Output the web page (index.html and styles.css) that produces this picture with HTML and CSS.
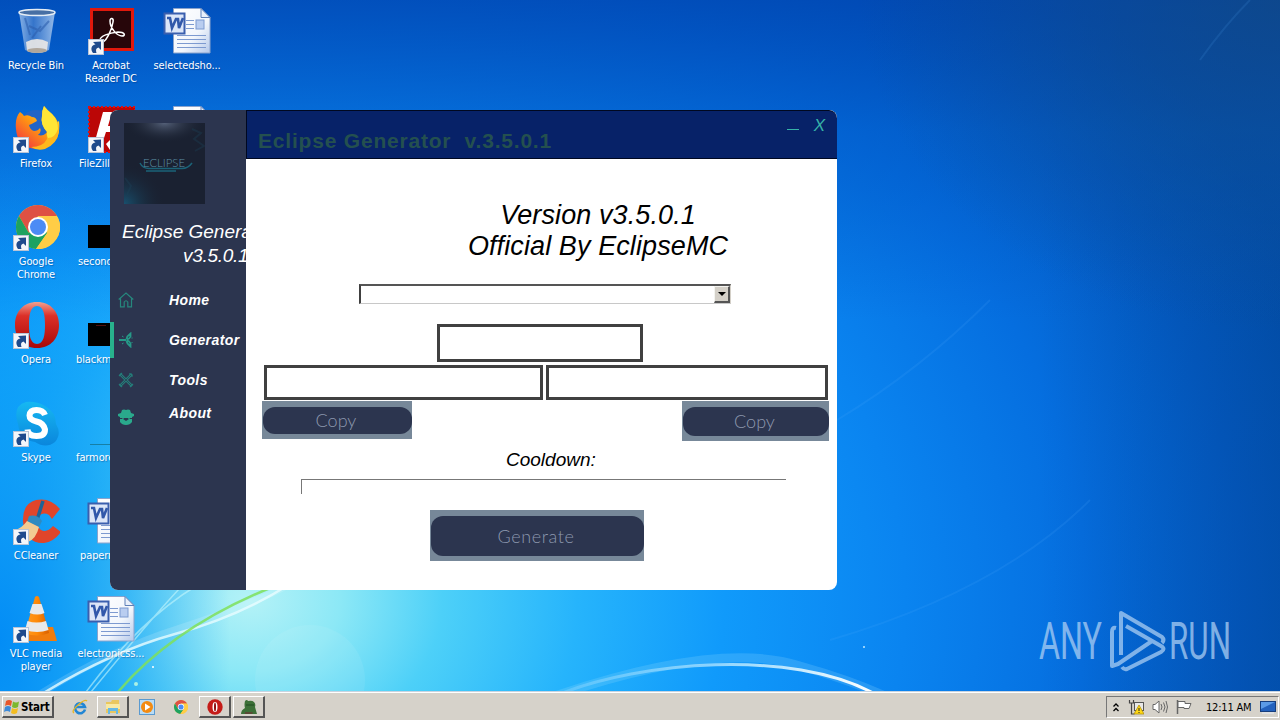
FILE: index.html
```html
<!DOCTYPE html>
<html lang="en">
<head>
    <meta charset="UTF-8">
    <meta name="viewport" content="width=device-width, initial-scale=1.0">
    <title>Eclipse Generator</title>
    <link rel="stylesheet" href="styles.css">
</head>
<body>

    <!-- Shared icons -->
    <svg width="0" height="0" class="defs">
        <defs>
            <linearGradient id="fox" x1="1" y1="0" x2="0" y2="1"><stop offset="0" stop-color="#ffee38"/><stop offset=".45" stop-color="#ff9a10"/><stop offset="1" stop-color="#f0204a"/></linearGradient>
            <linearGradient id="red" x1="0" y1="0" x2="0" y2="1"><stop offset="0" stop-color="#f0a090"/><stop offset=".3" stop-color="#dc3028"/><stop offset="1" stop-color="#a80808"/></linearGradient>
            <linearGradient id="page" x1="0" y1="0" x2="1" y2="1"><stop offset="0" stop-color="#ffffff"/><stop offset=".6" stop-color="#f2f6fc"/><stop offset="1" stop-color="#b4c8ea"/></linearGradient>
            <linearGradient id="glass" x1="0" y1="0" x2="1" y2="0"><stop offset="0" stop-color="#a9c9ee" stop-opacity=".8"/><stop offset=".4" stop-color="#4b83cf" stop-opacity=".7"/><stop offset="1" stop-color="#b9d3f2" stop-opacity=".8"/></linearGradient>
            <linearGradient id="skype" x1="0" y1="0" x2="0" y2="1"><stop offset="0" stop-color="#16b8f2"/><stop offset="1" stop-color="#0a86dc"/></linearGradient>
            <linearGradient id="cone" x1="0" y1="0" x2="1" y2="0"><stop offset="0" stop-color="#ff9a20"/><stop offset=".5" stop-color="#ff8a08"/><stop offset="1" stop-color="#d86000"/></linearGradient>
            <linearGradient id="arc" x1="0" y1="0" x2="1" y2="0"><stop offset="0" stop-color="#9fdcff" stop-opacity=".3"/><stop offset=".6" stop-color="#c8efff" stop-opacity=".8"/><stop offset="1" stop-color="#fff"/></linearGradient>
        </defs>
        <symbol id="shortcut" viewBox="0 0 16 16">
            <rect x=".5" y=".5" width="15" height="15" fill="#f4f6fa" stroke="#b9c4d6"/>
            <path d="M5 14C2 10 3.500 6 7.500 5.500L5 3l8-.500v8.500L10.500 8.500C8 9 7.500 11 8.500 14z" fill="#1f4a8c"/>
        </symbol>
        <symbol id="word" viewBox="0 0 48 48">
            <path d="M10.500.500H38l9 9V45H10.500z" fill="url(#page)" stroke="#8ba3cc"/>
            <path d="M38 .500v9h9z" fill="#e8effa" stroke="#5f80b8"/>
            <path d="M23 12.500h8M23 16.500h8M23 20.500h8M14 27.500h29M14 31.500h29M14 35.500h29M14 39.500h29" stroke="#7d9ad0"/>
            <rect x="33" y="12" width="8" height="9" fill="#b9cdf0" stroke="#7d9ad0"/>
            <rect x="1.500" y="5.500" width="20" height="20" fill="#dce6f8" stroke="#3a5fae" stroke-width="2"/>
            <path d="M4 10h3l2 10 4-9h2l1 9 4-10" fill="none" stroke="#3158aa" stroke-width="2.600"/>
        </symbol>
        <symbol id="chrome" viewBox="0 0 44 44">
            <circle cx="22" cy="22" r="22" fill="#ffcd46"/>
            <path d="M3 11A22 22 0 0 1 41 11H22L12.500 27.500z" fill="#de5144"/>
            <path d="M3 11A22 22 0 0 0 20 44L31.500 27.500H12.500z" fill="#1da261"/>
            <path d="M31.500 27.500L20 44A22 22 0 0 0 41.500 12H22z" fill="#ffcd46"/>
            <circle cx="22" cy="22" r="10" fill="#fff"/>
            <circle cx="22" cy="22" r="8" fill="#4c8bf5"/>
        </symbol>
        <symbol id="opera" viewBox="0 0 44 46">
            <path fill-rule="evenodd" d="M22 0C36 0 44 10 44 23S36 46 22 46 0 36 0 23 8 0 22 0zM22 4C15 4 14 14 14 23s1 19 8 19 8-10 8-19-1-19-8-19z" fill="url(#red)"/>
        </symbol>
    </svg>

    <div class="screen">
        <div class="desktop">

            <!-- Light streaks of the wallpaper -->
            <svg class="wallpaper" viewBox="0 0 1280 692" width="1280" height="692">
                <g fill="none">
                    <path d="M40 694Q110 650 180 628T290 584" stroke="#fff" stroke-width="7" opacity=".15"/>
                    <path d="M42 694Q110 652 175 634T290 584" stroke="#e8fcff" stroke-width="2.500" opacity=".8"/>
                    <path d="M118 692Q175 625 280 584" stroke="#7fe05a" stroke-width="2.500" opacity=".85"/>
                    <path d="M86 692Q140 620 196 586M91 692Q150 620 180 588" stroke="#c4f6fb" stroke-width="1.500" opacity=".6"/>
                    <path d="M555 696Q720 640 800 666Q850 680 885 696" stroke="#9fe2ff" stroke-width="9" opacity=".2"/>
                    <path d="M560 694C640 662 790 648 875 694" stroke="url(#arc)" stroke-width="3"/>
                    <path d="M837 420Q920 370 990 300M830 640Q1000 590 1090 500M1200 60Q1225 25 1250 0" stroke="#5fb4ff" stroke-width="2" opacity=".13"/>
                </g>
                <circle cx="310" cy="680" r="55" fill="#fff" opacity=".07"/>
                <circle cx="136" cy="684" r="2" fill="#c8ffe0" opacity=".8"/>
                <circle cx="153" cy="667" r="1" fill="#fff"/>
                <circle cx="864" cy="647" r="1" fill="#bfe8ff"/>
            </svg>

            <div class="icons">
                <div class="icon">
                    <svg viewBox="0 0 48 48">
                        <path d="M7 4h36l-6 38q-12 6-24 0z" fill="url(#glass)"/>
                        <path d="M14 34q11-6 22 0l-1 9q-10 4-20 0z" fill="#ece9e6" opacity=".9"/>
                        <path d="M13 10l5 17M17 18l11 5 9-10M20 30l9-12" stroke="#2d5fae" stroke-width="2" fill="none" opacity=".6"/>
                        <ellipse cx="25" cy="4.500" rx="18" ry="3" fill="#476fa4" stroke="#e5edf5" stroke-width="1.500"/>
                        <ellipse cx="25" cy="42.500" rx="10" ry="2.500" fill="#b0a79c"/>
                    </svg>
                    <span>Recycle Bin</span>
                </div>
                <div class="icon">
                    <svg viewBox="0 0 48 48">
                        <circle cx="24" cy="21" r="17" fill="#2164c8"/>
                        <path d="M4 23C3 15 5 9 8 6q3 2 4 4 4-2 8 1 4 0 5 4-5 3-8 4 1 5 5 6 4 0 6-3 2 4-2 7 8 2 10-6l11-8q3 26-22 28Q5 42 4 23z" fill="url(#fox)"/>
                        <path d="M32 0q3 4 8 8 8 7 7 18-2 12-14 17-8 2-14-2 12 0 16-8-1-3 1-6-8-8-6-17 0-6 2-10z" fill="#ffb81c"/>
                        <path d="M32 0q3 4 8 8 6 6 6 15-3 9-10 9-2-3-1-6-7-8-5-16 0-6 2-10z" fill="#ffe636"/>
                        <use href="#shortcut" x="1" y="31" width="16" height="16"/>
                    </svg>
                    <span>Firefox</span>
                </div>
                <div class="icon">
                    <svg viewBox="0 0 48 48"><use href="#chrome" x="4" y="1" width="44" height="44"/><use href="#shortcut" x="1" y="31" width="16" height="16"/></svg>
                    <span>Google<br>Chrome</span>
                </div>
                <div class="icon">
                    <svg viewBox="0 0 48 48"><use href="#opera" x="3" y="0" width="44" height="46"/><use href="#shortcut" x="1" y="31" width="16" height="16"/></svg>
                    <span>Opera</span>
                </div>
                <div class="icon">
                    <svg viewBox="0 0 48 48">
                        <path d="M14 2Q24 1 33 6 44 12 44 24q6 10-1 18-9 7-20 0Q8 40 6 24 0 6 14 2z" fill="url(#skype)"/>
                        <path d="M33 15Q31 10 24.500 10T17.500 15.500q0 4.500 7 6T33 29.500q0 6.500-8.500 6.500T15.500 29.500" fill="none" stroke="#fff" stroke-width="6"/>
                        <use href="#shortcut" x="1" y="31" width="16" height="16"/>
                    </svg>
                    <span>Skype</span>
                </div>
                <div class="icon">
                    <svg viewBox="0 0 48 48">
                        <path d="M48 11Q38-1 24 2 10 6 11 24q3 22 21 21 10-1 17-11l-8-6q-6 7-12 4-5-4-3-12 4-7 11-3l3 4z" fill="#e0452a"/>
                        <path d="M31 3l-6 19" stroke="#1f6396" stroke-width="3.500"/>
                        <path d="M17 18q8-2 13 5l-3 6-12-5z" fill="#2f8ac0"/>
                        <path d="M15 23l12 6q-3 12-11 15-9-2-13-12 7-2 12-9z" fill="#f2cb92"/>
                        <use href="#shortcut" x="1" y="31" width="16" height="16"/>
                    </svg>
                    <span>CCleaner</span>
                </div>
                <div class="icon">
                    <svg viewBox="0 0 48 48">
                        <path d="M11 31h30l4 14H9z" fill="#f07c0c"/>
                        <path d="M23 1q2-2 4 0l10 36q-12 5-24 0z" fill="url(#cone)"/>
                        <path d="M20.500 8h9l3 9q-7 3-15 0zM15.500 25q9 3 18.500 0l2.500 9q-11 4-23.500 0z" fill="#e9e9e9"/>
                        <use href="#shortcut" x="1" y="31" width="16" height="16"/>
                    </svg>
                    <span>VLC media<br>player</span>
                </div>

                <div class="icon">
                    <svg viewBox="0 0 48 48">
                        <rect x="4.500" y="1.500" width="41" height="40" fill="#27060a" stroke="#e0180c" stroke-width="3"/>
                        <path d="M13 32c0-4 9-7 18-8 7 0 8 4 4 4-5 0-12-8-12-15 0-4 4-3 3 1-1 7-6 18-10 20-2 1-3-.500-3-2z" fill="none" stroke="#fff" stroke-width="1.500"/>
                        <use href="#shortcut" x="1" y="31" width="16" height="16"/>
                    </svg>
                    <span>Acrobat<br>Reader DC</span>
                </div>
                <div class="icon cut cut-filezilla">
                    <svg viewBox="0 0 48 48">
                        <rect x="2" y="1" width="46" height="45" fill="#bb0606"/>
                        <rect x="2" y="1" width="46" height="45" fill="none" stroke="#e01010" stroke-width="2" stroke-dasharray="2 2"/>
                        <path d="M16 6h26l-2 7H23l-2 7h14l-2 6H19l-3 9H8z" fill="#fff"/>
                        <path d="M19 38l4-4 4 5-4 5z" fill="#fff"/>
                        <use href="#shortcut" x="1" y="31" width="16" height="16"/>
                    </svg>
                    <span>FileZilla</span>
                </div>
                <div class="icon cut cut-second">
                    <svg viewBox="0 0 48 48"><rect x="1" y="21" width="46" height="23"/></svg>
                    <span>second</span>
                </div>
                <div class="icon cut cut-black">
                    <svg viewBox="0 0 48 48"><rect x="1" y="21" width="46" height="23"/><path d="M9 23.500h10" stroke="#501010"/></svg>
                    <span>blackma</span>
                </div>
                <div class="icon cut cut-black">
                    <svg viewBox="0 0 48 48"><path d="M3 44.500h42" stroke="#167fa6"/></svg>
                    <span>farmore</span>
                </div>
                <div class="icon cut cut-paper">
                    <svg viewBox="0 0 48 48"><use href="#word" width="48" height="48"/></svg>
                    <span>papern</span>
                </div>
                <div class="icon">
                    <svg viewBox="0 0 48 48"><use href="#word" width="48" height="48"/></svg>
                    <span>electronicss...</span>
                </div>

                <div class="icon">
                    <svg viewBox="0 0 48 48"><use href="#word" width="48" height="48"/></svg>
                    <span>selectedsho...</span>
                </div>
                <div class="icon">
                    <svg viewBox="0 0 48 48"><use href="#word" width="48" height="48"/></svg>
                </div>
            </div>

            <svg class="watermark" viewBox="0 0 200 64" width="200" height="64">
                <g fill="#a9cdf3" opacity=".75">
                    <text x="2" y="50" textLength="63" lengthAdjust="spacingAndGlyphs">ANY</text>
                    <text x="132" y="50" textLength="62" lengthAdjust="spacingAndGlyphs">RUN</text>
                </g>
                <g fill="none" stroke="#a9cdf3" stroke-width="4" stroke-linejoin="round" opacity=".75">
                    <path d="M79 19q-4-1-4 4v34l6-2 34-23"/>
                    <path d="M84 46V4l41 24q3 3 0 6"/>
                    <path d="M89 17l35 20q5 3 0 6L90 60q-3 1-5-2"/>
                </g>
            </svg>

            <!-- Application window -->
            <div class="window">
                <div class="sidebar">
                    <svg class="logo" viewBox="0 0 81 81">
                        <defs>
                            <radialGradient id="lamp" cx=".5" cy="0" r=".5"><stop offset="0" stop-color="#546078"/><stop offset="1" stop-color="#1a2233" stop-opacity="0"/></radialGradient>
                            <radialGradient id="glow" cx="0" cy="1" r=".5"><stop offset="0" stop-color="#18506e"/><stop offset="1" stop-color="#1a2233" stop-opacity="0"/></radialGradient>
                        </defs>
                        <rect width="81" height="81" fill="#1a2131"/>
                        <rect width="81" height="40" fill="url(#lamp)"/>
                        <rect width="81" height="81" fill="url(#glow)"/>
                        <path d="M68 6l9 4-7 6 10 7-9 5M1 55l6 8-4 9" stroke="#1c4258" stroke-width="2" fill="none" opacity=".35"/>
                        <path d="M16 40q3 6 10 5.500h32q6 0 10-5.500M22 48h30" stroke="#1b6378" stroke-width="1.500" fill="none"/>
                        <text x="19" y="44" textLength="42" lengthAdjust="spacingAndGlyphs">ECLIPSE</text>
                    </svg>
                    <div class="brand">
                        <p>Eclipse Generator</p>
                        <p class="brand-version">v3.5.0.1</p>
                    </div>
                    <div class="menu">
                        <div class="menu-item home">
                            <svg viewBox="0 0 16 16" fill="none" stroke="#26877d" stroke-width="1.200"><path d="M.7 7.500L8 1l7.300 6.500M2.500 6.500v8.300h3.700V10q1.800-2.500 3.600 0v4.800h3.700V6.500"/></svg>
                            <span>Home</span>
                        </div>
                        <div class="menu-item active">
                            <svg viewBox="0 0 16 16" fill="none" stroke="#269a88"><path d="M1 8h7M8.500 7Q9 4 12.500 1.500v3Q11.500 7 8.500 8M8.500 9Q9 12 12.500 14.500v-3Q11.500 9 8.500 8" stroke-width="1.800"/><path d="M4 4l1.500 1M4 12l1.500-1M14 5.500v1M14 10v1"/></svg>
                            <span>Generator</span>
                        </div>
                        <div class="menu-item tools">
                            <svg viewBox="0 0 16 16" fill="none" stroke="#247c79"><path d="M2 2l12 12M14 2L2 14" stroke-width="2.600"/><path d="M1 4l3-3M12 1v3h3M1 12l3 3M12 15l3-3" stroke-width="1.200"/><path d="M3 3l10 10M13 3L3 13" stroke="#2c354f" stroke-width=".7"/></svg>
                            <span>Tools</span>
                        </div>
                        <div class="menu-item about">
                            <svg viewBox="0 0 16 16" fill="#2aa98c"><path d="M4 1q2-1 4 0 2-1 4 0l1 3 3 1v2l-2 1v1h-2q-1 2-2 0H6q-1 2-2 0H2V8L0 7V5l3-1z"/><path d="M2 10h3l3 2 3-2h3v3q-2 3-6 3t-6-3z"/></svg>
                            <span>About</span>
                        </div>
                    </div>
                </div>

                <div class="main">
                    <div class="titlebar">
                        <h1>Eclipse Generator&nbsp; v.3.5.0.1</h1>
                        <div class="controls"><span class="minimize"></span><span>X</span></div>
                    </div>
                    <div class="content">
                        <h2>Version v3.5.0.1<br>Official By EclipseMC</h2>
                        <div class="combo"><span class="combo-button"></span></div>
                        <div class="field field-name"></div>
                        <div class="row fields">
                            <div class="field field-left"></div>
                            <div class="field field-right"></div>
                        </div>
                        <div class="row copies">
                            <div class="button copy-left"><span>Copy</span></div>
                            <div class="button copy-right"><span>Copy</span></div>
                        </div>
                        <p class="cooldown">Cooldown:</p>
                        <div class="progress"></div>
                        <div class="button generate"><span>Generate</span></div>
                    </div>
                </div>
            </div>
        </div>

        <!-- Taskbar -->
        <div class="taskbar">
            <div class="start">
                <svg viewBox="0 0 16 16"><path d="M2 2q3-2 6 0L7 7Q4 5 1 7z" fill="#e8562a"/><path d="M9 2.500q3 2 6 0L14 8q-3 2-6 0z" fill="#7cb82f"/><path d="M1 8q3-2 6 0l-1 5q-3-2-6 0z" fill="#3d8ad8"/><path d="M8 9q3 2 6 0l-1 5q-3 2-6 0z" fill="#f4bd20"/></svg>
                <span>Start</span>
            </div>
            <div class="task ie">
                <svg viewBox="0 0 16 16" fill="none"><path d="M13 10.500A5 5 0 1 1 13 8H4" stroke="#2286d4" stroke-width="2.600"/><path d="M2 14Q-1 12 6 6T15 2" stroke="#e7b524" stroke-width="1.300"/></svg>
            </div>
            <div class="task raised">
                <svg viewBox="0 0 16 16"><path d="M1 3h5l1-2h7v4h1v9H1z" fill="#e9c75e"/><path d="M1 5h14v5H1z" fill="#f8e9a2"/><path d="M3 9h10v6h-2v-3H5v3H3z" fill="#67b9e4"/></svg>
            </div>
            <div class="task media">
                <svg viewBox="0 0 16 16"><rect x=".500" y=".500" width="15" height="15" fill="#b9dcf5" stroke="#5a9ad0"/><circle cx="8" cy="8" r="6" fill="#f38b12"/><path d="M6 4.500L11.500 8 6 11.500z" fill="#fff"/></svg>
            </div>
            <div class="task google">
                <svg viewBox="0 0 16 16"><use href="#chrome" x="1" y="1" width="14" height="14"/></svg>
            </div>
            <div class="task raised">
                <svg viewBox="0 0 16 16"><circle cx="8" cy="8" r="7.700" fill="#c51c18"/><ellipse cx="8" cy="8" rx="2.500" ry="5" fill="#fff"/><ellipse cx="8" cy="8" rx="1" ry="4.500" fill="#8c0e0e"/></svg>
            </div>
            <div class="task raised">
                <svg viewBox="0 0 16 16"><path d="M4 2q2-2 3 0 4-1 6 1 2 2 1 5l2 7H0q0-4 4-6-1-3 0-7z" fill="#3d7038"/><path d="M5 6h8" stroke="#204b20"/><path d="M4 13h8l-1 2H4z" fill="#5a4a36"/></svg>
            </div>
            <div class="tray">
                <svg class="chevrons" viewBox="0 0 8 10" fill="none" stroke="#000" stroke-width="1.300"><path d="M1.500 4.500L4 2l2.500 2.500M1.500 9L4 6.500 6.500 9"/></svg>
                <svg class="tray-icon" viewBox="0 0 16 16"><path d="M1.500 1v3h4V1M3.500 4v11h3" fill="none" stroke="#444" stroke-width="1.200"/><rect x="6.500" y="3.500" width="9" height="8" fill="#e8e8e8" stroke="#555"/><path d="M11 6l5 9H6z" fill="#ffd814" stroke="#a88600" stroke-width=".7"/><path d="M11 9v3M11 13v1" stroke="#222"/></svg>
                <svg class="tray-icon speaker" viewBox="0 0 16 16" fill="#fff" stroke="#666"><path d="M1 5.500h2L7 2v12l-4-3.500H1z"/><path d="M9 5q2 3 0 6M11.500 3.500q3 4.500 0 9M14 2q3 6 0 12" fill="none"/></svg>
                <svg class="tray-icon flag" viewBox="0 0 16 16" fill="#fff" stroke="#666"><path d="M1.500 1v14" stroke-width="1.500"/><path d="M2 2.500h7v2h6l-2 5H8v-1H2z"/></svg>
                <span class="clock">12:11 AM</span>
                <svg class="show-desktop" viewBox="0 0 16 14"><rect x=".500" y="1.500" width="15" height="10" fill="#2462bd" stroke="#173e7c"/><path d="M1 2h14L1 9z" fill="#5c9be6"/><path d="M2 13h12" stroke="#e8eef8"/></svg>
            </div>
        </div>
    </div>

</body>
</html>
```
FILE: styles.css
```css
* {
    box-sizing: border-box;
}
body {
    margin: 0;
    font-family: "Liberation Sans", Arial, sans-serif;
    overflow: hidden;
}
svg {
    display: block;
    flex-shrink: 0;
}
p, h1, h2 {
    margin: 0;
    font-weight: normal;
}
.defs {
    position: absolute;
}
.screen {
    width: 1280px;
    height: 720px;
    display: flex;
    flex-direction: column;
}

/* Desktop */
.desktop {
    position: relative;
    height: 691px;
    overflow: hidden;
    background:
        radial-gradient(ellipse 230px 480px at 0 640px, rgba(0, 138, 245, 0.95) 0%, rgba(0, 148, 246, 0.6) 50%, rgba(0, 150, 246, 0) 100%),
        radial-gradient(ellipse 420px 330px at 1280px 0, rgba(18, 72, 130, 0.75) 0%, rgba(10, 70, 140, 0) 100%),
        linear-gradient(180deg, rgba(0, 70, 178, 0.8) 0, rgba(0, 86, 196, 0.5) 130px, rgba(0, 100, 215, 0) 320px),
        linear-gradient(270deg, rgba(0, 66, 150, 0.4) 0, rgba(0, 70, 160, 0) 240px),
        radial-gradient(ellipse 1130px 900px at 250px 600px, #b4f2f7 0%, #8ce8f6 8%, #4dd0f8 17%, #26b4fc 29%, #109afb 42%, #0a84f0 58%, #056edf 74%, #045cc4 88%, #0352ac 100%);
}
.wallpaper {
    position: absolute;
    top: 0;
    left: 0;
}
.icons {
    position: relative;
    display: grid;
    grid-auto-flow: column;
    grid-template-rows: repeat(7, 98px);
    grid-template-columns: 75px 75px 77px;
    width: 227px;
}
.icon {
    display: flex;
    flex-direction: column;
    align-items: center;
    padding-top: 8px;
    padding-right: 3px;
    color: #fff;
    font-family: "DejaVu Sans Condensed", "DejaVu Sans", sans-serif;
    font-stretch: condensed;
    font-size: 11px;
    line-height: 13px;
    letter-spacing: -0.1px;
    text-align: center;
    text-shadow: 1px 1px 1px rgba(0, 30, 90, 0.35);
    white-space: nowrap;
}
.icon svg {
    width: 48px;
    height: 48px;
    margin-bottom: 3px;
}
.cut span {
    align-self: flex-start;
}
.cut-filezilla span {
    padding-left: 4px;
}
.cut-second span {
    padding-left: 3px;
}
.cut-black span {
    padding-left: 1px;
}
.cut-paper span {
    padding-left: 5px;
}
.watermark {
    position: absolute;
    left: 1037px;
    top: 609px;
    font-family: Roboto, sans-serif;
    font-size: 51px;
    font-weight: 400;
}

/* Window */
.window {
    position: absolute;
    left: 110px;
    top: 110px;
    width: 727px;
    height: 480px;
    display: flex;
    border-radius: 8px;
    overflow: hidden;
    background-color: #fff;
}
.sidebar {
    width: 136px;
    background-color: #2c354f;
    color: #fff;
    overflow: hidden;
    flex-shrink: 0;
    padding-top: 13px;
}
.logo {
    width: 81px;
    height: 81px;
    margin-left: 14px;
    font-size: 12px;
}
.logo text {
    fill: #5d90a4;
    font-family: Lato, sans-serif;
    font-weight: 300;
}
.brand {
    margin-top: 16px;
    padding-left: 12px;
    font-size: 19px;
    font-style: italic;
    line-height: 24px;
    white-space: nowrap;
}
.brand-version {
    padding-left: 61px;
    letter-spacing: -0.3px;
}
.menu {
    margin-top: 13px;
    font-size: 14px;
    font-weight: bold;
    font-style: italic;
    letter-spacing: 0.4px;
}
.menu-item {
    display: flex;
    align-items: center;
    height: 38px;
    padding-left: 8px;
    gap: 35px;
}
.menu-item svg {
    width: 16px;
    height: 16px;
}
.menu-item.active {
    height: 36px;
    margin-top: 3px;
    border-left: 4px solid #28b28c;
    padding-left: 4px;
}
.menu-item.tools {
    margin-top: 3px;
}
.menu-item.about {
    height: 34px;
    align-items: flex-start;
    padding-top: 10px;
}
.menu-item.about span {
    margin-top: -4px;
}
.main {
    flex: 1;
}
.titlebar {
    display: flex;
    justify-content: space-between;
    height: 49px;
    padding: 0 12px 0 11px;
    background-color: #072268;
    border: 1px solid #000820;
    border-right: none;
    border-top-right-radius: 8px;
}
.titlebar h1 {
    padding-top: 18px;
    font-size: 21px;
    line-height: 24px;
    font-weight: bold;
    letter-spacing: 0.8px;
    color: #24504f;
}
.controls {
    display: flex;
    gap: 15px;
    padding-top: 6px;
    color: #36b3a8;
    font-size: 17px;
    font-style: italic;
    line-height: 18px;
}
.minimize {
    width: 12px;
    height: 1px;
    margin-top: 12px;
    background-color: #36b3a8;
}
.content {
    padding-top: 41px;
}
.content h2 {
    margin-left: 113px;
    font-size: 27px;
    line-height: 31px;
    font-style: italic;
    text-align: center;
    letter-spacing: 0.1px;
    color: #000;
}
.combo {
    display: flex;
    justify-content: flex-end;
    width: 372px;
    height: 20px;
    margin: 22px 0 0 113px;
    border: 2px solid #404040;
    border-top-color: #555;
    border-right: 1px solid #d4d0c8;
    border-bottom: 1px solid #c8c8c8;
}
.combo-button {
    display: flex;
    align-items: center;
    justify-content: center;
    width: 16px;
    height: 17px;
    background-color: #d4d0c8;
    border: 1px solid #f4f4f0;
    border-right: 2px solid #555;
    border-bottom: 2px solid #555;
}
.combo-button::after {
    content: "";
    border: 4px solid transparent;
    border-top-color: #000;
    border-bottom: none;
}
.row {
    display: flex;
}
.field {
    height: 35px;
    border: 3px solid #404040;
}
.field-name {
    width: 206px;
    height: 38px;
    margin: 20px 0 0 191px;
}
.fields {
    gap: 3px;
    margin: 3px 0 0 18px;
}
.field-left {
    width: 279px;
}
.field-right {
    width: 282px;
}
.copies {
    justify-content: space-between;
    align-items: flex-start;
    margin: 1px 8px 0 16px;
}
.button {
    padding: 6px 0 5px 1px;
    background-color: #778899;
    color: #8d98ae;
    font-family: Lato, sans-serif;
    font-weight: 300;
    font-size: 18px;
}
.button span {
    display: flex;
    align-items: center;
    justify-content: center;
    height: 100%;
    padding-right: 3px;
    padding-bottom: 1px;
    border-radius: 12px;
    background-color: #2c354f;
}
.copy-left {
    width: 150px;
    height: 38px;
}
.copy-right {
    width: 147px;
    height: 40px;
}
.cooldown {
    margin: 8px 0 0 260px;
    font-size: 19px;
    line-height: 22px;
    font-style: italic;
    color: #000;
}
.progress {
    width: 485px;
    height: 15px;
    margin: 8px 0 0 55px;
    border-top: 1px solid #777;
    border-left: 1px solid #777;
}
.generate {
    width: 214px;
    height: 51px;
    margin: 16px 0 0 184px;
    letter-spacing: 0.6px;
}

/* Taskbar */
.taskbar {
    display: flex;
    align-items: flex-start;
    height: 29px;
    padding: 3px 1px 0 2px;
    background-color: #d6d2ca;
    border-top: 1px solid #c8d4e0;
    box-shadow: inset 0 1px 0 #fff;
    font-family: "DejaVu Sans Condensed", "DejaVu Sans", sans-serif;
    font-stretch: condensed;
    font-size: 11px;
}
.start {
    display: flex;
    align-items: center;
    width: 52px;
    height: 22px;
    margin-top: 1px;
    padding-left: 1px;
    gap: 1px;
    font-weight: bold;
    font-size: 11.5px;
    letter-spacing: -0.2px;
}
.start, .raised {
    border: 1px solid #fff;
    border-right: 2px solid #555;
    border-bottom: 2px solid #555;
}
.start svg {
    width: 16px;
    height: 16px;
}
.task {
    display: flex;
    align-items: center;
    justify-content: center;
    width: 32px;
    height: 22px;
    margin-top: 1px;
    margin-right: 2px;
}
.task svg {
    width: 16px;
    height: 16px;
}
.ie {
    width: 33px;
    margin-left: 9px;
    margin-right: 1px;
}
.tray {
    display: flex;
    align-items: center;
    width: 173px;
    height: 22px;
    margin: 1px 0 0 auto;
    padding-left: 5px;
    border: 1px solid #fff;
    border-top-color: #777;
    border-left-color: #777;
}
.chevrons {
    width: 8px;
    height: 10px;
}
.tray-icon {
    width: 16px;
    height: 16px;
    margin-left: 8px;
}
.clock {
    margin: 0 0 0 14px;
    width: 47px;
    letter-spacing: -0.2px;
    white-space: nowrap;
}
.show-desktop {
    width: 16px;
    height: 14px;
    margin-left: 7px;
}
```
